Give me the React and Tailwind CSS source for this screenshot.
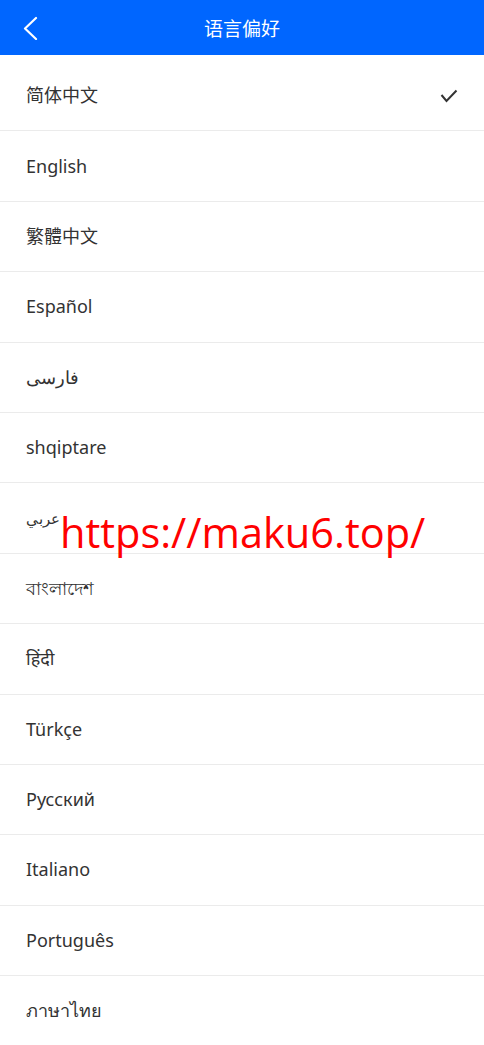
import React from "react";

const languages = [
  { label: "简体中文", selected: true },
  { label: "English" },
  { label: "繁體中文" },
  { label: "Español" },
  { label: "فارسی" },
  { label: "shqiptare" },
  { label: "عربي", small: true },
  { label: "বাংলাদেশ" },
  { label: "हिंदी" },
  { label: "Türkçe" },
  { label: "Русский" },
  { label: "Italiano" },
  { label: "Português" },
  { label: "ภาษาไทย" },
];

const font = "font-['Noto_Sans','Noto_Sans_CJK_SC',sans-serif]";

const App = () => {
  return (
    <div className={`relative w-full h-[1045px] overflow-hidden bg-white ${font}`}>
      {/* header */}
      <div className="h-[55px] bg-[#0066ff] flex items-center relative">
        <button className="absolute left-[20px] top-[15px] w-[20px] h-[26px] flex items-center justify-center">
          <svg width="16" height="24" viewBox="0 0 16 24" fill="none">
            <polyline points="14,2 3,12.5 14,23" stroke="white" strokeWidth="2.2" strokeLinecap="round" strokeLinejoin="round" />
          </svg>
        </button>
        <h1 className="flex-1 text-center text-white text-[19px] leading-none pt-[3px]">语言偏好</h1>
      </div>

      {/* list */}
      <ul className="mt-[6px]">
        {languages.map((lang) => (
          <li key={lang.label} className="h-[70.4px] border-b border-[#ebebeb] flex items-center justify-between pl-[26px] pr-[26px]">
            <span className={`text-[#333] ${lang.small ? "text-[15px]" : "text-[18px]"}`}>{lang.label}</span>
            {lang.selected && (
              <svg width="18" height="14" viewBox="0 0 18 14" fill="none">
                <polyline points="1.5,6 6.5,12 16.5,1.5" stroke="#333" strokeWidth="2" />
              </svg>
            )}
          </li>
        ))}
      </ul>

      {/* watermark */}
      <div className="absolute left-[60px] top-[512px] text-[#ff0000] text-[41.5px] leading-none font-['Open_Sans',sans-serif] pointer-events-none">
        https://maku6.top/
      </div>
    </div>
  );
};

export default App;
